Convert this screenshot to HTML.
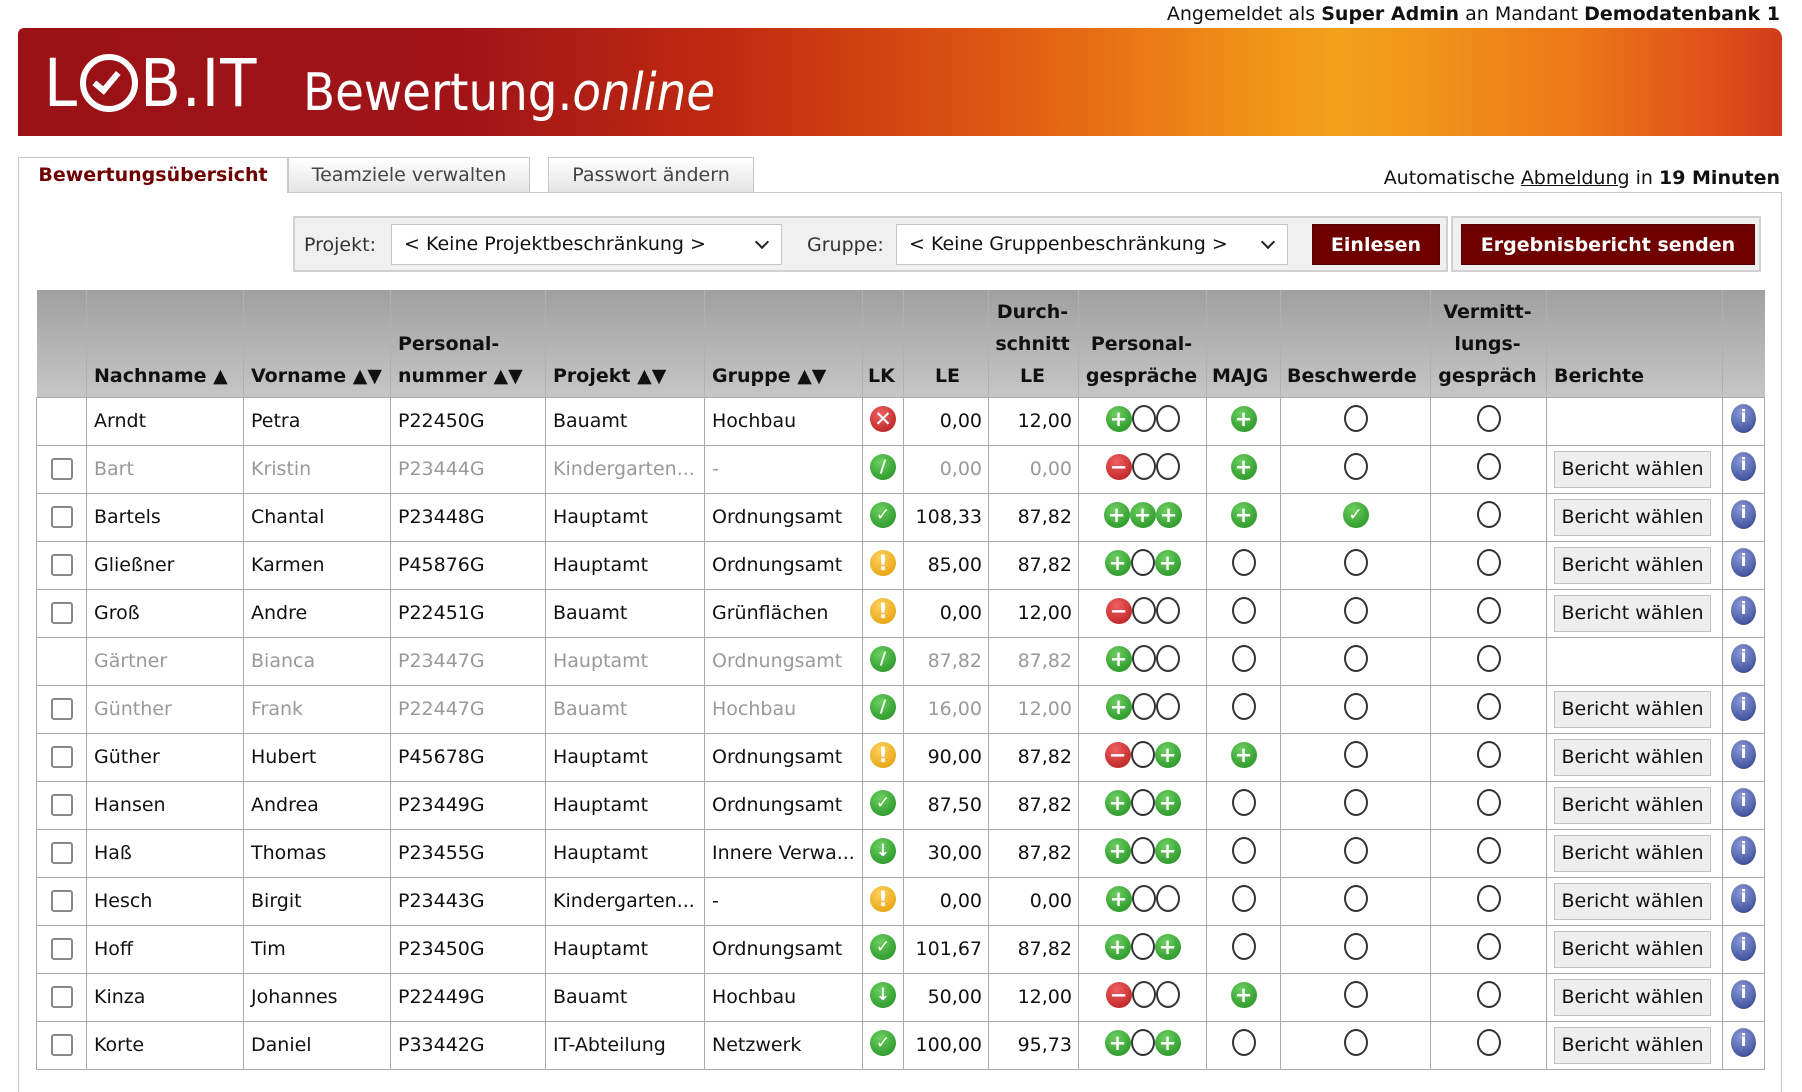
<!DOCTYPE html>
<html><head><meta charset="utf-8"><style>
*{box-sizing:border-box}
body{margin:0;width:1802px;height:1071px;overflow:hidden;background:#fff;font-family:"DejaVu Sans","Liberation Sans",sans-serif;font-size:19px;color:#111;position:relative}
.abs{position:absolute}
#top{right:22px;top:3px;font-size:19px;white-space:nowrap}
#banner{left:18px;top:28px;width:1764px;height:108px;border-radius:6px 10px 0 0;background:linear-gradient(90deg,#9a1216 0%,#a01418 25%,#c02a10 40%,#de5612 55%,#ef8a16 68%,#f3a21c 75%,#ec7a16 88%,#e0501a 96%,#d03c1a 100%)}
#logo{left:44px;top:44px;color:#fff;font-family:"DejaVu Sans Condensed","DejaVu Sans",sans-serif;font-size:66px;letter-spacing:1px;white-space:nowrap;line-height:80px}
#logo2{left:303px;top:60px;color:#fff;font-family:"DejaVu Sans Condensed","DejaVu Sans",sans-serif;font-size:52px;white-space:nowrap;line-height:66px}
.tab{top:157px;height:35px;font-size:19px;line-height:35px;text-align:center;border:1px solid #c8c8c8;border-bottom:none}
#main{left:18px;top:192px;width:1764px;height:900px;border:1px solid #c8c8c8;border-bottom:none}
#auto{right:22px;top:167px;white-space:nowrap}
.fbox{top:216px;height:56px;border:2px solid #d0d0d0;background:#f0f0f0}
.sel{top:224px;height:41px;border:1px solid #c4c4c4;background:#fff;padding-left:12px;line-height:39px;white-space:nowrap}
.sel:after{content:"";position:absolute;right:14px;top:12px;width:8px;height:8px;border-right:2px solid #222;border-bottom:2px solid #222;transform:rotate(45deg)}
.btn{top:224px;height:41px;background:#6e0000;color:#fff;font-weight:bold;text-align:center;line-height:41px;border:1px solid #500}
table{position:absolute;left:36px;top:290px;border-collapse:collapse;table-layout:fixed;width:1728px}
th{background:linear-gradient(#a0a0a0,#c6c6c6);text-align:left;vertical-align:bottom;font-weight:bold;padding:0 4px 5px 7px;line-height:32px;height:107px;border-left:1px solid #b0b0b0;white-space:nowrap;font-size:19px}
td{height:48px;border:1px solid #aaa;padding:0 4px 0 7px;white-space:nowrap;overflow:hidden;vertical-align:middle}
td.c{text-align:center;padding:0}
td.n{text-align:right;padding-right:6px}
tr.gr td{color:#999}
.cb{display:inline-block;width:22px;height:22px;border:2px solid #888;border-radius:3px;vertical-align:middle}
.i{display:inline-block;width:26px;height:26px;border-radius:50%;vertical-align:middle;position:relative;margin-top:-6px;color:#fff;font-weight:bold;text-align:center;line-height:26px;font-size:21px;font-family:"DejaVu Sans",sans-serif}
.g{background:radial-gradient(circle at 40% 30%,#6cd060,#1e8a1e)}
.r{background:radial-gradient(circle at 40% 30%,#f06060,#b01818)}
.y{background:radial-gradient(circle at 40% 30%,#ffd060,#e09a00)}
.o{border:2px solid #333;background:#fff;width:24px;height:27px}
.b{background:radial-gradient(circle at 40% 30%,#8a9ad8,#2c3e8a);width:25px;height:29px}
.sm{font-size:17px}
.bw{display:inline-block;width:157px;height:37px;line-height:35px;border:1px solid #c0c0c0;background:#eee;text-align:center;color:#111;font-size:19px}
</style></head><body>
<div class="abs" id="top">Angemeldet als <b>Super Admin</b> an Mandant <b>Demodatenbank 1</b></div>
<div class="abs" id="banner"></div>
<div class="abs" id="logo">L<span style="display:inline-block;width:58px;height:58px;border:6px solid #fff;border-radius:50%;vertical-align:-6px;margin:0 2px;position:relative"><span style="position:absolute;left:13px;top:7px;width:15px;height:26px;border-right:6px solid #fff;border-bottom:6px solid #fff;transform:rotate(40deg)"></span></span>B.IT</div>
<div class="abs" id="logo2">Bewertung.<i>online</i></div>
<div class="abs" id="main"></div>
<div class="abs tab" style="left:18px;width:270px;background:#fff;color:#6e0000;font-weight:bold;height:36px">Bewertungsübersicht</div>
<div class="abs tab" style="left:288px;width:242px;background:linear-gradient(#fff,#e4e4e4);color:#444">Teamziele verwalten</div>
<div class="abs tab" style="left:548px;width:206px;background:linear-gradient(#fff,#e4e4e4);color:#444">Passwort ändern</div>
<div class="abs" id="auto">Automatische <u>Abmeldung</u> in <b>19 Minuten</b></div>
<div class="abs fbox" style="left:293px;width:1155px"></div>
<div class="abs fbox" style="left:1451px;width:310px"></div>
<div class="abs" style="left:304px;top:234px;color:#333">Projekt:</div>
<div class="abs sel" style="left:391px;width:391px">&lt; Keine Projektbeschränkung &gt;</div>
<div class="abs" style="left:807px;top:234px;color:#333">Gruppe:</div>
<div class="abs sel" style="left:896px;width:392px">&lt; Keine Gruppenbeschränkung &gt;</div>
<div class="abs btn" style="left:1312px;width:128px">Einlesen</div>
<div class="abs btn" style="left:1461px;width:294px">Ergebnisbericht senden</div>
<table>
<colgroup><col style="width:50px"><col style="width:157px"><col style="width:147px"><col style="width:155px"><col style="width:159px"><col style="width:158px"><col style="width:41px"><col style="width:85px"><col style="width:90px"><col style="width:128px"><col style="width:74px"><col style="width:150px"><col style="width:116px"><col style="width:176px"><col style="width:42px"></colgroup>
<tr><th style="border-left:none"></th><th>Nachname ▲</th><th>Vorname ▲▼</th><th>Personal-<br>nummer ▲▼</th><th>Projekt ▲▼</th><th>Gruppe ▲▼</th><th style="padding-left:5px">LK</th><th style="text-align:center">LE</th><th style="text-align:center;padding-left:2px">Durch-<br>schnitt<br>LE</th><th style="text-align:center;padding-left:2px">Personal-<br>gespräche</th><th style="padding-left:5px">MAJG</th><th style="padding-left:6px">Beschwerde</th><th style="text-align:center;padding-left:2px">Vermitt-<br>lungs-<br>gespräch</th><th>Berichte</th><th></th></tr>
<tr><td></td><td>Arndt</td><td>Petra</td><td>P22450G</td><td>Bauamt</td><td>Hochbau</td><td class="c"><span class="i r">✕</span></td><td class="n">0,00</td><td class="n">12,00</td><td class="c"><span class="i g">+</span><span class="i o"></span><span class="i o"></span></td><td class="c"><span class="i g">+</span></td><td class="c"><span class="i o"></span></td><td class="c"><span class="i o"></span></td><td></td><td class="c"><span class="i b sm">i</span></td></tr>
<tr class="gr"><td class="c"><span class="cb"></span></td><td>Bart</td><td>Kristin</td><td>P23444G</td><td>Kindergarten...</td><td>-</td><td class="c"><span class="i g sm">/</span></td><td class="n">0,00</td><td class="n">0,00</td><td class="c"><span class="i r">−</span><span class="i o"></span><span class="i o"></span></td><td class="c"><span class="i g">+</span></td><td class="c"><span class="i o"></span></td><td class="c"><span class="i o"></span></td><td><span class="bw">Bericht wählen</span></td><td class="c"><span class="i b sm">i</span></td></tr>
<tr><td class="c"><span class="cb"></span></td><td>Bartels</td><td>Chantal</td><td>P23448G</td><td>Hauptamt</td><td>Ordnungsamt</td><td class="c"><span class="i g sm">✓</span></td><td class="n">108,33</td><td class="n">87,82</td><td class="c"><span class="i g">+</span><span class="i g">+</span><span class="i g">+</span></td><td class="c"><span class="i g">+</span></td><td class="c"><span class="i g sm">✓</span></td><td class="c"><span class="i o"></span></td><td><span class="bw">Bericht wählen</span></td><td class="c"><span class="i b sm">i</span></td></tr>
<tr><td class="c"><span class="cb"></span></td><td>Gließner</td><td>Karmen</td><td>P45876G</td><td>Hauptamt</td><td>Ordnungsamt</td><td class="c"><span class="i y">!</span></td><td class="n">85,00</td><td class="n">87,82</td><td class="c"><span class="i g">+</span><span class="i o"></span><span class="i g">+</span></td><td class="c"><span class="i o"></span></td><td class="c"><span class="i o"></span></td><td class="c"><span class="i o"></span></td><td><span class="bw">Bericht wählen</span></td><td class="c"><span class="i b sm">i</span></td></tr>
<tr><td class="c"><span class="cb"></span></td><td>Groß</td><td>Andre</td><td>P22451G</td><td>Bauamt</td><td>Grünflächen</td><td class="c"><span class="i y">!</span></td><td class="n">0,00</td><td class="n">12,00</td><td class="c"><span class="i r">−</span><span class="i o"></span><span class="i o"></span></td><td class="c"><span class="i o"></span></td><td class="c"><span class="i o"></span></td><td class="c"><span class="i o"></span></td><td><span class="bw">Bericht wählen</span></td><td class="c"><span class="i b sm">i</span></td></tr>
<tr class="gr"><td></td><td>Gärtner</td><td>Bianca</td><td>P23447G</td><td>Hauptamt</td><td>Ordnungsamt</td><td class="c"><span class="i g sm">/</span></td><td class="n">87,82</td><td class="n">87,82</td><td class="c"><span class="i g">+</span><span class="i o"></span><span class="i o"></span></td><td class="c"><span class="i o"></span></td><td class="c"><span class="i o"></span></td><td class="c"><span class="i o"></span></td><td></td><td class="c"><span class="i b sm">i</span></td></tr>
<tr class="gr"><td class="c"><span class="cb"></span></td><td>Günther</td><td>Frank</td><td>P22447G</td><td>Bauamt</td><td>Hochbau</td><td class="c"><span class="i g sm">/</span></td><td class="n">16,00</td><td class="n">12,00</td><td class="c"><span class="i g">+</span><span class="i o"></span><span class="i o"></span></td><td class="c"><span class="i o"></span></td><td class="c"><span class="i o"></span></td><td class="c"><span class="i o"></span></td><td><span class="bw">Bericht wählen</span></td><td class="c"><span class="i b sm">i</span></td></tr>
<tr><td class="c"><span class="cb"></span></td><td>Güther</td><td>Hubert</td><td>P45678G</td><td>Hauptamt</td><td>Ordnungsamt</td><td class="c"><span class="i y">!</span></td><td class="n">90,00</td><td class="n">87,82</td><td class="c"><span class="i r">−</span><span class="i o"></span><span class="i g">+</span></td><td class="c"><span class="i g">+</span></td><td class="c"><span class="i o"></span></td><td class="c"><span class="i o"></span></td><td><span class="bw">Bericht wählen</span></td><td class="c"><span class="i b sm">i</span></td></tr>
<tr><td class="c"><span class="cb"></span></td><td>Hansen</td><td>Andrea</td><td>P23449G</td><td>Hauptamt</td><td>Ordnungsamt</td><td class="c"><span class="i g sm">✓</span></td><td class="n">87,50</td><td class="n">87,82</td><td class="c"><span class="i g">+</span><span class="i o"></span><span class="i g">+</span></td><td class="c"><span class="i o"></span></td><td class="c"><span class="i o"></span></td><td class="c"><span class="i o"></span></td><td><span class="bw">Bericht wählen</span></td><td class="c"><span class="i b sm">i</span></td></tr>
<tr><td class="c"><span class="cb"></span></td><td>Haß</td><td>Thomas</td><td>P23455G</td><td>Hauptamt</td><td>Innere Verwa...</td><td class="c"><span class="i g sm">↓</span></td><td class="n">30,00</td><td class="n">87,82</td><td class="c"><span class="i g">+</span><span class="i o"></span><span class="i g">+</span></td><td class="c"><span class="i o"></span></td><td class="c"><span class="i o"></span></td><td class="c"><span class="i o"></span></td><td><span class="bw">Bericht wählen</span></td><td class="c"><span class="i b sm">i</span></td></tr>
<tr><td class="c"><span class="cb"></span></td><td>Hesch</td><td>Birgit</td><td>P23443G</td><td>Kindergarten...</td><td>-</td><td class="c"><span class="i y">!</span></td><td class="n">0,00</td><td class="n">0,00</td><td class="c"><span class="i g">+</span><span class="i o"></span><span class="i o"></span></td><td class="c"><span class="i o"></span></td><td class="c"><span class="i o"></span></td><td class="c"><span class="i o"></span></td><td><span class="bw">Bericht wählen</span></td><td class="c"><span class="i b sm">i</span></td></tr>
<tr><td class="c"><span class="cb"></span></td><td>Hoff</td><td>Tim</td><td>P23450G</td><td>Hauptamt</td><td>Ordnungsamt</td><td class="c"><span class="i g sm">✓</span></td><td class="n">101,67</td><td class="n">87,82</td><td class="c"><span class="i g">+</span><span class="i o"></span><span class="i g">+</span></td><td class="c"><span class="i o"></span></td><td class="c"><span class="i o"></span></td><td class="c"><span class="i o"></span></td><td><span class="bw">Bericht wählen</span></td><td class="c"><span class="i b sm">i</span></td></tr>
<tr><td class="c"><span class="cb"></span></td><td>Kinza</td><td>Johannes</td><td>P22449G</td><td>Bauamt</td><td>Hochbau</td><td class="c"><span class="i g sm">↓</span></td><td class="n">50,00</td><td class="n">12,00</td><td class="c"><span class="i r">−</span><span class="i o"></span><span class="i o"></span></td><td class="c"><span class="i g">+</span></td><td class="c"><span class="i o"></span></td><td class="c"><span class="i o"></span></td><td><span class="bw">Bericht wählen</span></td><td class="c"><span class="i b sm">i</span></td></tr>
<tr><td class="c"><span class="cb"></span></td><td>Korte</td><td>Daniel</td><td>P33442G</td><td>IT-Abteilung</td><td>Netzwerk</td><td class="c"><span class="i g sm">✓</span></td><td class="n">100,00</td><td class="n">95,73</td><td class="c"><span class="i g">+</span><span class="i o"></span><span class="i g">+</span></td><td class="c"><span class="i o"></span></td><td class="c"><span class="i o"></span></td><td class="c"><span class="i o"></span></td><td><span class="bw">Bericht wählen</span></td><td class="c"><span class="i b sm">i</span></td></tr>
</table>
</body></html>
